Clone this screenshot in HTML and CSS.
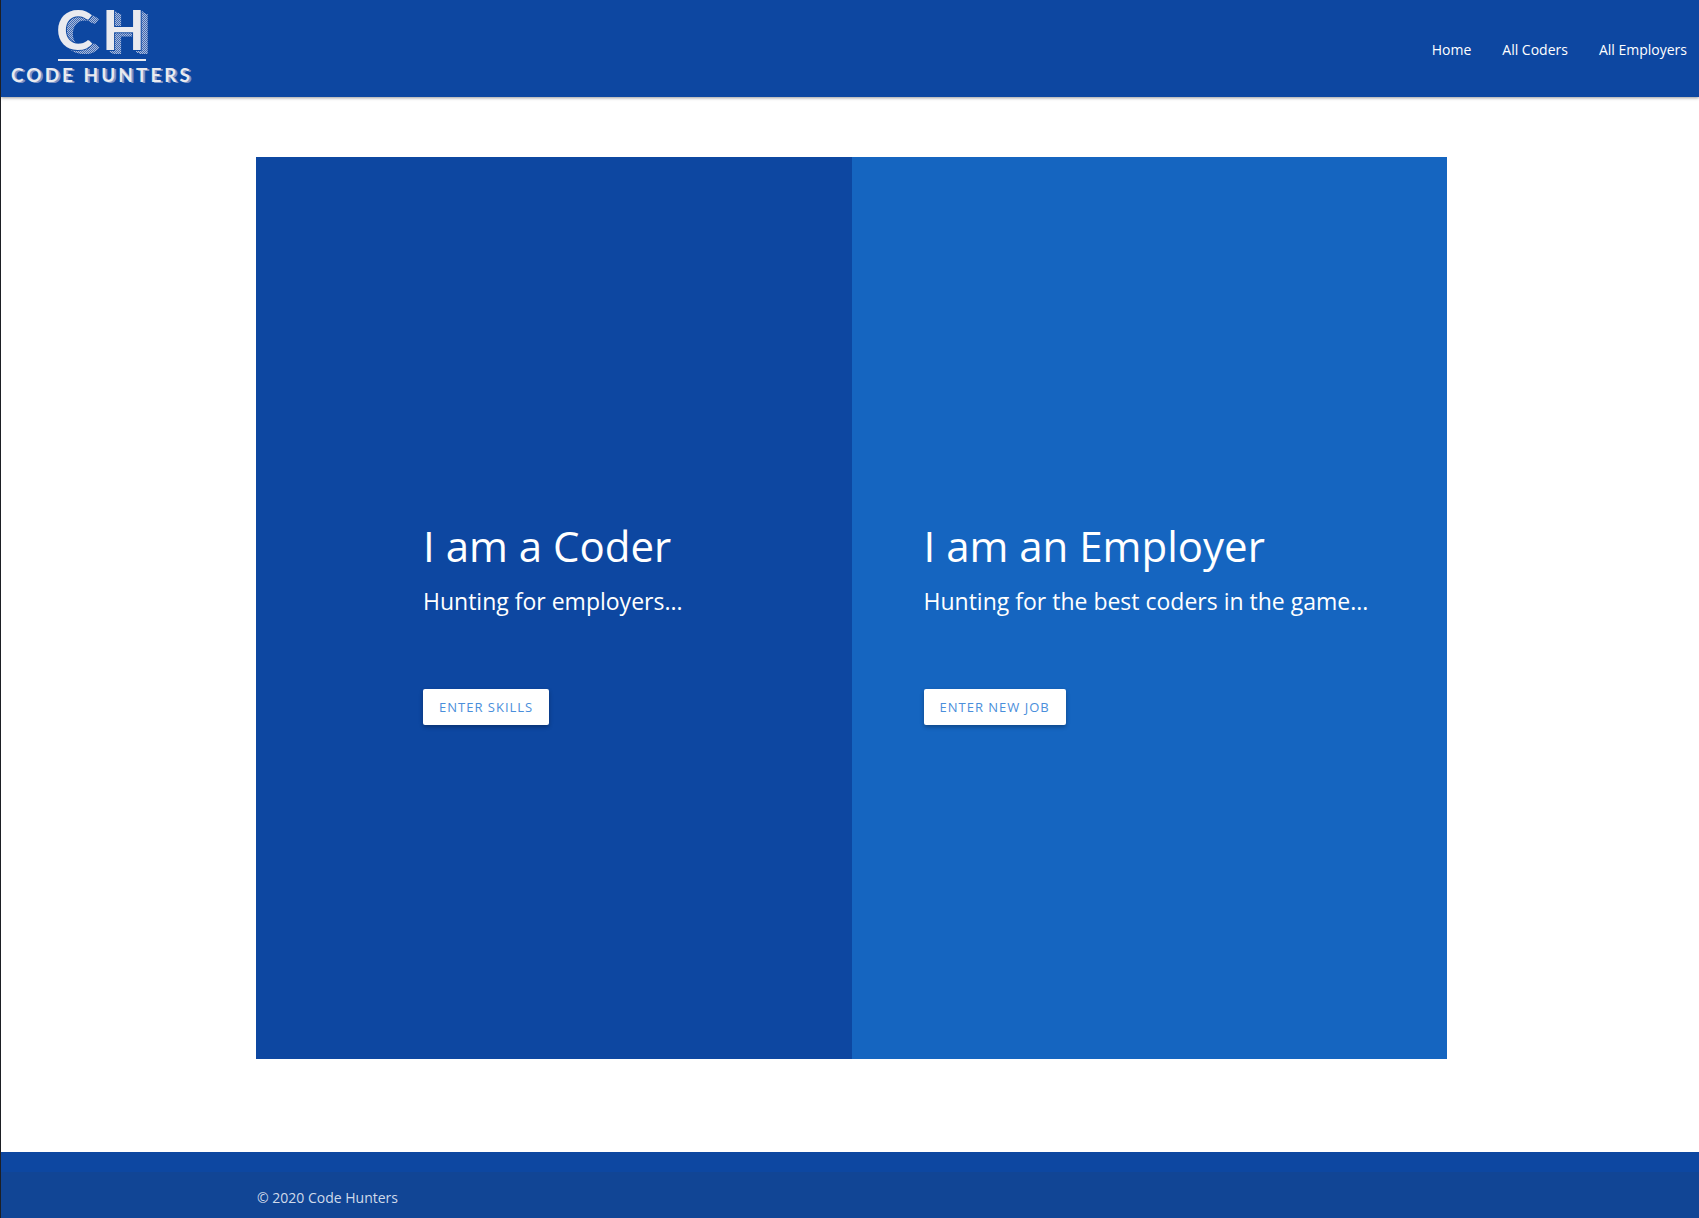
FILE: index.html
```html
<!DOCTYPE html>
<html lang="en">
<head>
<meta charset="utf-8">
<title>Code Hunters</title>
<link rel="stylesheet" href="styles.css">
</head>
<body>
<header class="navbar">
  <a class="brand" href="#" aria-label="Code Hunters home">
    <svg class="logo" width="200" height="97" viewBox="0 0 200 97" aria-hidden="true">
      <defs>
        <pattern id="dots" width="2" height="2" patternUnits="userSpaceOnUse">
          <rect width="2" height="2" fill="#3f69b3"/>
          <rect width="1" height="1" fill="#a9bbdc"/>
          <rect x="1" y="1" width="1" height="1" fill="#a9bbdc"/>
        </pattern>
        <mask id="depth" maskUnits="userSpaceOnUse" x="0" y="0" width="200" height="97">
          <g class="logo-initials" fill="#fff">
            <use href="#initials" x="1" y="1"/>
            <use href="#initials" x="2" y="1"/>
            <use href="#initials" x="3" y="2"/>
            <use href="#initials" x="4" y="3"/>
            <use href="#initials" x="5" y="3"/>
            <use href="#initials" x="6" y="4"/>
            <use href="#initials" x="7" y="4"/>
          </g>
        </mask>
      </defs>
      <rect width="200" height="97" fill="url(#dots)" mask="url(#depth)"/>
      <g class="logo-initials logo-face"><text id="initials" x="55 101" y="50">CH</text></g>
      <rect x="57" y="59" width="88" height="2" fill="#e9eaef"/>
      <text class="logo-name" x="10" y="82">CODE HUNTERS</text>
    </svg>
  </a>
  <nav class="links">
    <a href="#">Home</a>
    <a href="#">All Coders</a>
    <a href="#">All Employers</a>
  </nav>
</header>
<main class="panels">
  <section class="panel panel-coder">
    <h1>I am a Coder</h1>
    <p>Hunting for employers...</p>
    <button type="button">Enter skills</button>
  </section>
  <section class="panel panel-employer">
    <h1>I am an Employer</h1>
    <p>Hunting for the best coders in the game...</p>
    <button type="button">Enter new job</button>
  </section>
</main>
<footer class="footer">
  <div class="copyright">© 2020 Code Hunters</div>
</footer>
</body>
</html>
```
FILE: styles.css
```css
* {
  box-sizing: border-box;
}

body {
  display: flex;
  flex-direction: column;
  min-height: 100vh;
  margin: 0;
  border-left: 1px solid #1d1f24;
  background: #fff;
  color: #fff;
  font-family: "Segoe UI", "Open Sans", "Noto Sans", sans-serif;
  font-size: 14px;
}

.navbar {
  display: flex;
  align-items: center;
  justify-content: space-between;
  background: #0d47a1;
  box-shadow: 0 1px 3px rgba(0, 0, 0, 0.4);
}

.brand,
.logo {
  display: block;
}

.logo-initials {
  font: 700 56px Lato, sans-serif;
}

.logo-face {
  fill: #e9eaef;
  stroke: #0d47a1;
  stroke-width: 2px;
  paint-order: stroke;
}

.logo-name {
  fill: #e9eaef;
  font: 700 19px Lato, sans-serif;
  letter-spacing: 3px;
  text-shadow: 2px 1px 0 #7c94c6;
}

.links {
  display: flex;
  gap: 31px;
  padding: 2px 12px 0;
}

.links a {
  color: #fff;
  line-height: 24px;
  text-decoration: none;
}

.panels {
  flex: 1;
  display: grid;
  grid-template-columns: 1fr 1fr;
  padding: 60px 252px 93px 255px;
}

.panel {
  display: flex;
  flex-direction: column;
  align-items: flex-start;
  padding: 364px 72px 324px;
}

.panel-coder {
  padding-left: 167px;
  background: #0d47a1;
}

.panel-employer {
  background: #1565c0;
}

.panel h1 {
  margin: 0;
  font-size: 42px;
  font-weight: 400;
  line-height: 50px;
}

.panel p {
  margin: 16px 0 74px;
  font-size: 23px;
  line-height: 28px;
  white-space: nowrap;
}

.panel button {
  height: 36px;
  padding: 0 16px;
  border: 0;
  border-radius: 2px;
  background: #fff;
  box-shadow: 0 2px 4px rgba(0, 0, 0, 0.3);
  color: #4a8edb;
  font-family: inherit;
  font-size: 13px;
  letter-spacing: 1px;
  text-transform: uppercase;
}

.footer {
  padding-top: 20px;
  background: #0d47a1;
}

.copyright {
  padding: 14px 256px 8px;
  background: #114595;
  color: #cfdaea;
  line-height: 24px;
}
```
